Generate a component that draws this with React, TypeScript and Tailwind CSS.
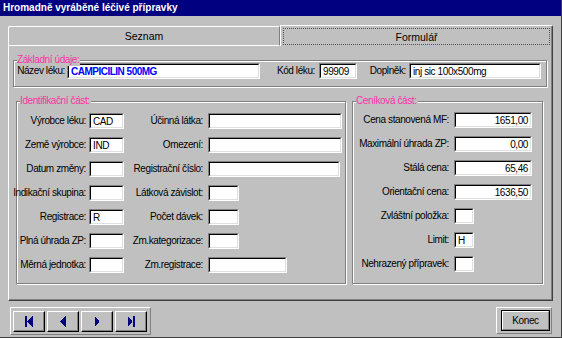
import type { ReactNode } from 'react';
import clsx from 'clsx';

const PINK = 'text-[#ff2fa8]';

export default function App() {
  return (
    <div className="flex h-[338px] w-[562px] flex-col border-b border-r border-b-[#404040] border-r-[#404040] bg-[#c0c0c0] font-['Liberation_Sans',Arial,sans-serif] text-[10px] leading-[12px] tracking-[-0.4px] text-black">
      {/* titulek okna */}
      <div className="h-4 shrink-0 bg-[#000080] pl-[3px] text-[10px] font-bold leading-[15px] tracking-normal text-white">
        Hromadně vyráběné léčivé přípravky
      </div>

      <div className="px-2 pt-[9px]">
        {/* záložky */}
        <div className="flex h-[21px] items-end text-[10.5px] tracking-normal">
          <div className="flex h-5 w-[272px] items-center justify-center rounded-tl-[2px] border-b border-l border-t border-white border-r border-r-[#808080]">
            Seznam
          </div>
          <div className="flex h-[21px] w-[273px] items-center justify-center rounded-tr-[2px] border-l border-t border-white border-r border-r-[#404040] px-[2px] pt-px shadow-[inset_-1px_0_0_#808080]">
            <div className="flex h-[17px] w-full items-center justify-center border border-dotted border-[#505050]">
              Formulář
            </div>
          </div>
        </div>

        {/* panel formuláře */}
        <div className="flex h-[255px] w-[545px] flex-col border-b border-l border-r border-l-white border-b-[#404040] border-r-[#404040] pt-[14px] shadow-[inset_-1px_-1px_0_#808080]">
          <Group title="Základní údaje:" className="ml-1 h-[27px] w-[534px]">
            <div className="mt-[2px] flex h-4 items-center">
              <Label className="w-[53px] pr-[2px]">Název léku:</Label>
              <Field className="w-[193px] font-bold tracking-[-0.5px] text-[#0000ff]">
                CAMPICILIN 500MG
              </Field>
              <Label className="w-[59px] pr-1">Kód léku:</Label>
              <Field className="w-[38px]">99909</Field>
              <Label className="w-[52px] pr-[3px]">Doplněk:</Label>
              <Field className="w-[132px]">inj sic 100x500mg</Field>
            </div>
          </Group>

          <div className="mt-[14px] flex">
            <Group title="Identifikační část:" className="ml-[7px] h-[183px] w-[330px]">
              <div className="flex flex-col gap-2 pt-[11px]">
                <IdRow left="Výrobce léku:" leftValue="CAD" right="Účinná látka:" rightWidth="w-[134px]" />
                <IdRow left="Země výrobce:" leftValue="IND" right="Omezení:" rightWidth="w-[134px]" />
                <IdRow left="Datum změny:" right="Registrační číslo:" rightWidth="w-[132px]" />
                <IdRow left="Indikační skupina:" right="Látková závislot:" rightWidth="w-[31px]" />
                <IdRow left="Registrace:" leftValue="R" right="Počet dávek:" rightWidth="w-[31px]" />
                <IdRow left="Plná úhrada ZP:" right="Zm.kategorizace:" rightWidth="w-[31px]" />
                <IdRow left="Měrná jednotka:" right="Zm.registrace:" rightWidth="w-[79px]" />
              </div>
            </Group>

            <Group title="Ceníková část:" className="ml-[6px] h-[183px] w-[191px]">
              <div className="flex flex-col gap-2 pt-[10px]">
                <PriceRow label="Cena stanovená MF:" value="1651,00" />
                <PriceRow label="Maximální úhrada ZP:" value="0,00" />
                <PriceRow label="Stálá cena:" value="65,46" />
                <PriceRow label="Orientační cena:" value="1636,50" />
                <PriceRow label="Zvláštní položka:" small />
                <PriceRow label="Limit:" value="H" small />
                <PriceRow label="Nehrazený přípravek:" small />
              </div>
            </Group>
          </div>
        </div>

        {/* spodní lišta */}
        <div className="flex items-start justify-between pt-[6px]">
          <div className="ml-[2px] flex h-[28px] w-[141px] items-center gap-[2px] border border-white border-b-[#808080] border-r-[#808080] pl-[2px]">
            <NavButton kind="first" />
            <NavButton kind="prev" />
            <NavButton kind="next" />
            <NavButton kind="last" />
          </div>
          <div className="mr-px flex h-[27px] w-[56px] items-center justify-end border border-white border-b-[#808080] border-r-[#808080] pr-px">
            <div className="flex h-[21px] w-[49px] items-center justify-center border border-black">
              <div className="flex h-full w-full items-center justify-center border border-white border-b-[#808080] border-r-[#808080]">
                Konec
              </div>
            </div>
          </div>
        </div>
      </div>
    </div>
  );
}

function Group({
  title,
  className,
  children,
}: {
  title: string;
  className?: string;
  children: ReactNode;
}) {
  return (
    <div
      className={clsx(
        'relative shrink-0 border border-[#808080] shadow-[inset_1px_1px_0_#fff,1px_1px_0_#fff]',
        className,
      )}
    >
      <span className={clsx('absolute -top-[7px] left-[3px] bg-[#c0c0c0] pr-px', PINK)}>
        {title}
      </span>
      {children}
    </div>
  );
}

function Label({ className, children }: { className?: string; children: ReactNode }) {
  return (
    <span className={clsx('flex shrink-0 justify-end whitespace-nowrap', className)}>
      {children}
    </span>
  );
}

function Field({
  className,
  right,
  children,
}: {
  className?: string;
  right?: boolean;
  children?: ReactNode;
}) {
  return (
    <div
      className={clsx(
        'h-4 shrink-0 border border-[#808080] border-b-white border-r-white',
        className,
      )}
    >
      <div
        className={clsx(
          'h-full overflow-hidden whitespace-nowrap border border-black border-b-[#dfdfdf] border-r-[#dfdfdf] bg-white px-[2px] leading-[13px]',
          right && 'text-right',
        )}
      >
        {children}
      </div>
    </div>
  );
}

function IdRow({
  left,
  leftValue,
  right,
  rightWidth,
}: {
  left: string;
  leftValue?: string;
  right: string;
  rightWidth: string;
}) {
  return (
    <div className="flex h-4 items-center">
      <Label className="w-[72px] pr-[3px]">{left}</Label>
      <Field className="w-[35px]">{leftValue}</Field>
      <Label className="w-[84px] pr-[5px]">{right}</Label>
      <Field className={rightWidth} />
    </div>
  );
}

function PriceRow({
  label,
  value,
  small,
}: {
  label: string;
  value?: string;
  small?: boolean;
}) {
  return (
    <div className="flex h-4 items-center">
      <Label className="w-[101px] pr-[5px]">{label}</Label>
      <Field className={small ? 'w-[20px]' : 'w-[78px]'} right={!small}>
        {value}
      </Field>
    </div>
  );
}

function NavButton({ kind }: { kind: 'first' | 'prev' | 'next' | 'last' }) {
  // šipky navigátoru kreslené natvrdo, jako bitmapy v původní aplikaci
  return (
    <div className="flex h-[21px] w-[32px] items-center justify-center border border-white border-b-black border-r-black shadow-[inset_-1px_-1px_0_#808080]">
      <svg width="10" height="11" viewBox="0 0 10 11" shapeRendering="crispEdges" className="text-[#000080]">
        {kind === 'first' && (
          <>
            <rect x="1" y="0" width="2" height="11" fill="currentColor" />
            <path d="M8.5 0 L3.5 5.5 L8.5 11 Z" fill="currentColor" />
          </>
        )}
        {kind === 'prev' && <path d="M7.5 0 L2.5 5.5 L7.5 11 Z" fill="currentColor" />}
        {kind === 'next' && <path d="M2.5 0 L7.5 5.5 L2.5 11 Z" fill="currentColor" />}
        {kind === 'last' && (
          <>
            <path d="M1.5 0 L6.5 5.5 L1.5 11 Z" fill="currentColor" />
            <rect x="7" y="0" width="2" height="11" fill="currentColor" />
          </>
        )}
      </svg>
    </div>
  );
}
